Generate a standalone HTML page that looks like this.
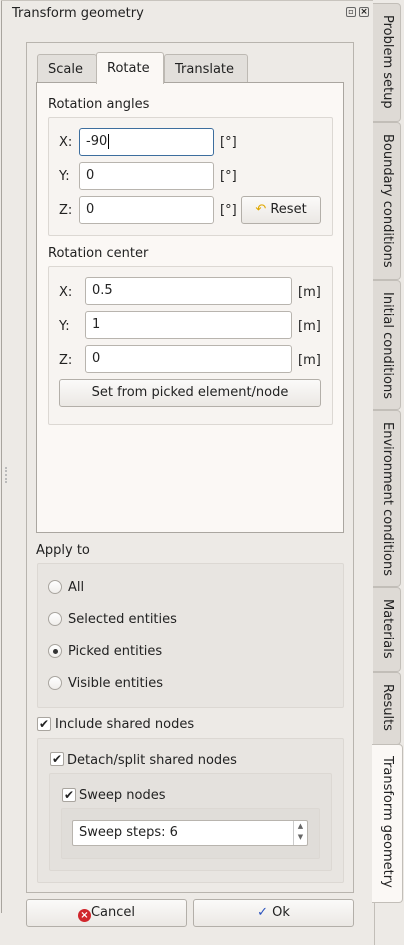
<!DOCTYPE html>
<html><head><style>
*{box-sizing:border-box;margin:0;padding:0}
body{width:404px;height:945px;background:#edeae6;font-family:"DejaVu Sans","Liberation Sans",sans-serif;font-size:13px;color:#222;position:relative;overflow:hidden}
.a{position:absolute}
.t{position:absolute;white-space:nowrap;line-height:16px;margin-top:1px}
.inp{position:absolute;background:#fff;border:1px solid #b8b4ae;border-radius:3px;padding-left:6px;line-height:26px}
.btn{position:absolute;background:linear-gradient(#fbfaf9,#ebe8e4);border:1px solid #b3afa9;border-radius:3px;text-align:center;line-height:26px}
.grp{position:absolute;border:1px solid #dcd8d3;border-radius:2px}
.rad{position:absolute;width:14px;height:14px;border:1px solid #a9a59f;border-radius:50%;background:linear-gradient(#fff,#f0eeeb)}
.chk{position:absolute;width:14px;height:14px;border:1px solid #a9a59f;border-radius:2px;background:#fff;font-size:12px;line-height:12px;text-align:center;font-weight:bold;color:#222}
.tab{position:absolute;left:373px;width:28px;background:#dedad5;border:1px solid #c2beb8;border-left:none;border-radius:0 4px 4px 0}
.tab span{position:absolute;left:6px;top:11px;writing-mode:vertical-rl;white-space:nowrap;line-height:16px}
</style></head><body>
<div class="a" style="left:1px;top:0;width:1px;height:913px;background:#a8a49e"></div>
<div class="a" style="left:1px;top:0;width:372px;height:1px;background:#c8c4be"></div>
<div class="a" style="left:5px;top:467px;width:2px;height:16px;border-left:2px dotted #bbb"></div>
<div class="t" style="left:12px;top:5px">Transform geometry</div>
<div class="a" style="left:346px;top:7px;width:10px;height:10px;border:1px solid #666;border-radius:2px;font-size:8px;line-height:8px;text-align:center">▫</div>
<div class="a" style="left:359px;top:7px;width:10px;height:10px;border:1px solid #666;border-radius:2px;font-size:9px;line-height:8px;text-align:center;font-weight:bold">×</div>

<div class="a" style="left:26px;top:42px;width:328px;height:851px;border:1px solid #b8b4ae"></div>
<div class="a" style="left:37px;top:54px;width:60px;height:29px;background:#e2dfdb;border:1px solid #bdb9b3;border-radius:3px 3px 0 0"></div>
<div class="t" style="left:48px;top:61px">Scale</div>
<div class="a" style="left:164px;top:54px;width:84px;height:29px;background:#e2dfdb;border:1px solid #bdb9b3;border-radius:3px 3px 0 0"></div>
<div class="t" style="left:175px;top:61px">Translate</div>
<div class="a" style="left:36px;top:82px;width:308px;height:451px;background:#fbf8f5;border:1px solid #aaa6a0"></div>
<div class="a" style="left:96px;top:52px;width:68px;height:32px;background:#fbf8f5;border:1px solid #bdb9b3;border-bottom:none;border-radius:3px 3px 0 0"></div>
<div class="t" style="left:107px;top:60px">Rotate</div>

<div class="t" style="left:48px;top:96px">Rotation angles</div>
<div class="grp" style="left:48px;top:117px;width:285px;height:119px;background:#f7f4f1"></div>
<div class="t" style="left:59px;top:134px">X:</div>
<div class="inp" style="left:79px;top:128px;width:135px;height:28px;border-color:#3d6e9e">-90<span style="border-left:1px solid #000;margin-left:1px"></span></div>
<div class="t" style="left:220px;top:134px">[°]</div>
<div class="t" style="left:59px;top:168px">Y:</div>
<div class="inp" style="left:79px;top:162px;width:135px;height:28px">0</div>
<div class="t" style="left:220px;top:168px">[°]</div>
<div class="t" style="left:59px;top:202px">Z:</div>
<div class="inp" style="left:79px;top:196px;width:135px;height:28px">0</div>
<div class="t" style="left:220px;top:202px">[°]</div>
<div class="btn" style="left:241px;top:196px;width:80px;height:28px"><span style="color:#e0a800">↶</span> Reset</div>

<div class="t" style="left:48px;top:245px">Rotation center</div>
<div class="grp" style="left:48px;top:266px;width:285px;height:159px;background:#f7f4f1"></div>
<div class="t" style="left:59px;top:284px">X:</div>
<div class="inp" style="left:85px;top:277px;width:207px;height:28px">0.5</div>
<div class="t" style="left:298px;top:284px">[m]</div>
<div class="t" style="left:59px;top:318px">Y:</div>
<div class="inp" style="left:85px;top:311px;width:207px;height:28px">1</div>
<div class="t" style="left:298px;top:318px">[m]</div>
<div class="t" style="left:59px;top:352px">Z:</div>
<div class="inp" style="left:85px;top:345px;width:207px;height:28px">0</div>
<div class="t" style="left:298px;top:352px">[m]</div>
<div class="btn" style="left:59px;top:379px;width:262px;height:28px">Set from picked element/node</div>

<div class="t" style="left:36px;top:542px">Apply to</div>
<div class="grp" style="left:37px;top:563px;width:307px;height:145px;background:#e8e5e1"></div>
<div class="rad" style="left:48px;top:580px"></div><div class="t" style="left:68px;top:579px">All</div>
<div class="rad" style="left:48px;top:612px"></div><div class="t" style="left:68px;top:611px">Selected entities</div>
<div class="rad" style="left:48px;top:644px"><div style="position:absolute;left:4px;top:4px;width:5px;height:5px;border-radius:50%;background:#333"></div></div><div class="t" style="left:68px;top:643px">Picked entities</div>
<div class="rad" style="left:48px;top:676px"></div><div class="t" style="left:68px;top:675px">Visible entities</div>

<div class="chk" style="left:37px;top:717px">✔</div><div class="t" style="left:55px;top:716px">Include shared nodes</div>
<div class="grp" style="left:37px;top:738px;width:307px;height:145px;background:#e8e5e1"></div>
<div class="chk" style="left:50px;top:752px">✔</div><div class="t" style="left:67px;top:752px">Detach/split shared nodes</div>
<div class="grp" style="left:49px;top:773px;width:283px;height:98px;background:#e4e1dd"></div>
<div class="chk" style="left:62px;top:788px">✔</div><div class="t" style="left:79px;top:787px">Sweep nodes</div>
<div class="grp" style="left:61px;top:808px;width:259px;height:51px;background:#e0ddd9"></div>
<div class="inp" style="left:72px;top:820px;width:236px;height:26px;line-height:24px;border-radius:2px">Sweep steps: 6
<div style="position:absolute;right:0;top:0;width:14px;height:24px;border-left:1px solid #ccc;font-size:7px;line-height:11px;text-align:center;color:#666">▲<br>▼</div></div>

<div class="btn" style="left:26px;top:899px;width:161px;height:28px"><span style="display:inline-block;width:13px;height:13px;border-radius:50%;background:#d0262c;color:#fff;font-size:10px;line-height:13px;font-weight:bold;vertical-align:-2px">×</span>Cancel</div>
<div class="btn" style="left:193px;top:899px;width:161px;height:28px"><span style="color:#2a52be;font-weight:bold">✓</span> Ok</div>

<div class="tab" style="top:3px;height:119px"><span>Problem setup</span></div>
<div class="tab" style="top:122px;height:158px"><span>Boundary conditions</span></div>
<div class="tab" style="top:280px;height:130px"><span>Initial conditions</span></div>
<div class="tab" style="top:410px;height:177px"><span>Environment conditions</span></div>
<div class="tab" style="top:587px;height:85px"><span>Materials</span></div>
<div class="tab" style="top:672px;height:73px"><span>Results</span></div>
<div class="tab" style="top:744px;height:159px;left:372px;width:31px;background:#fbf8f5;border-left:none"><span style="left:7px">Transform geometry</span></div>
<div class="a" style="left:374px;top:903px;width:1px;height:42px;background:#c2beb8"></div>
</body></html>
